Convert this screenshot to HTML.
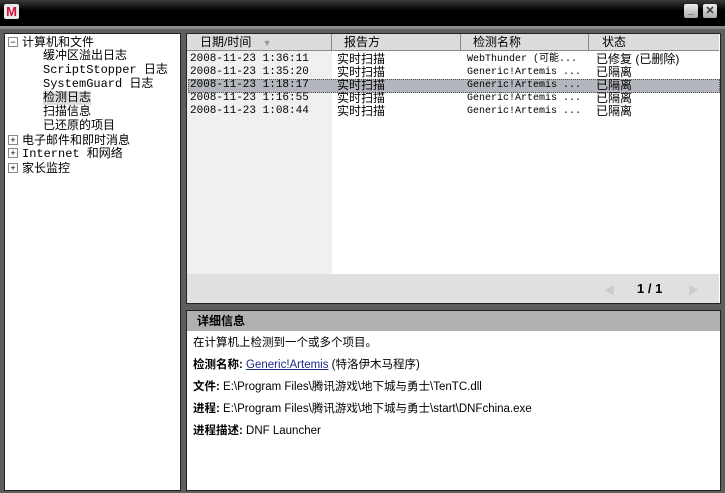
<!DOCTYPE html><html><head><meta charset="utf-8"><style>
body{margin:0;width:725px;height:493px;background:#5e5e5e;position:relative;overflow:hidden;font-family:"Liberation Sans","Noto Sans CJK SC",sans-serif;font-size:12px;color:#000}
.a{position:absolute}
.mono{font-family:"Liberation Mono","Noto Sans CJK SC",monospace;font-size:11px}
.r div{height:13px;line-height:13px;overflow:visible;white-space:nowrap}
.t div{height:14px;line-height:14px;white-space:nowrap}
.b{display:inline-block;width:8px;height:8px;border:1px solid #888;font:9px/8px sans-serif;text-align:center;margin-right:4px;vertical-align:1px}
</style></head><body>
<div class="a" style="left:0;top:0;width:725px;height:26px;background:linear-gradient(#3a3a3a,#000 40%,#000)"></div>
<div class="a" style="left:0;top:26px;width:725px;height:3px;background:#8a8a8a"></div>
<div class="a" style="left:4px;top:4px;width:15px;height:15px;background:#e8e8e8;border-radius:2px;color:#d0103a;font:bold 13px/15px 'Liberation Sans';text-align:center">M</div>
<div class="a" style="left:684px;top:4px;width:14px;height:14px;background:linear-gradient(#eee,#aaa);border-radius:2px;font:bold 10px/14px sans-serif;text-align:center;color:#333">_</div>
<div class="a" style="left:703px;top:4px;width:14px;height:14px;background:linear-gradient(#eee,#aaa);border-radius:2px;font:bold 11px/14px sans-serif;text-align:center;color:#333">✕</div>

<div class="a" style="left:4px;top:33px;width:175px;height:456px;background:#fff;border:1px solid #222"></div>
<div class="a t" style="left:8px;top:35px;width:170px;font-size:12px">
<div><span class="b">−</span>计算机和文件</div>
<div class="mono" style="padding-left:35px;font-size:12px">缓冲区溢出日志</div>
<div class="mono" style="padding-left:35px;font-size:12px">ScriptStopper 日志</div>
<div class="mono" style="padding-left:35px;font-size:12px">SystemGuard 日志</div>
<div class="mono" style="padding-left:35px;font-size:12px"><span style="background:#ddd">检测日志</span></div>
<div class="mono" style="padding-left:35px;font-size:12px">扫描信息</div>
<div class="mono" style="padding-left:35px;font-size:12px">已还原的项目</div>
<div><span class="b">+</span>电子邮件和即时消息</div>
<div class="mono" style="font-size:12px"><span class="b">+</span>Internet 和网络</div>
<div><span class="b">+</span>家长监控</div>
</div>

<div class="a" style="left:186px;top:33px;width:533px;height:269px;background:#fff;border:1px solid #222"></div>
<div class="a" style="left:187px;top:50px;width:145px;height:224px;background:#f0f0f0"></div>
<div class="a" style="left:187px;top:34px;width:532px;height:16px;background:#dcdcdc;border-bottom:1px solid #888"></div>
<div class="a" style="left:200px;top:35px;line-height:15px">日期/时间 <span style="color:#999;font-size:9px;margin-left:8px">▼</span></div>
<div class="a" style="left:331px;top:34px;width:1px;height:16px;background:#888"></div>
<div class="a" style="left:344px;top:35px;line-height:15px">报告方</div>
<div class="a" style="left:460px;top:34px;width:1px;height:16px;background:#888"></div>
<div class="a" style="left:473px;top:35px;line-height:15px">检测名称</div>
<div class="a" style="left:588px;top:34px;width:1px;height:16px;background:#888"></div>
<div class="a" style="left:602px;top:35px;line-height:15px">状态</div>
<div class="a" style="left:188px;top:79px;width:530px;height:12px;background:#b4b6be;border:1px dotted #555"></div>
<div class="a mono r" style="left:190px;top:53px"><div>2008-11-23 1:36:11</div><div>2008-11-23 1:35:20</div><div>2008-11-23 1:18:17</div><div>2008-11-23 1:16:55</div><div>2008-11-23 1:08:44</div></div>
<div class="a r" style="left:337px;top:53px"><div>实时扫描</div><div>实时扫描</div><div>实时扫描</div><div>实时扫描</div><div>实时扫描</div></div>
<div class="a mono r" style="left:467px;top:53px;font-size:10px"><div>WebThunder (可能...</div><div>Generic!Artemis ...</div><div>Generic!Artemis ...</div><div>Generic!Artemis ...</div><div>Generic!Artemis ...</div></div>
<div class="a r" style="left:596px;top:53px"><div>已修复 (已删除)</div><div>已隔离</div><div>已隔离</div><div>已隔离</div><div>已隔离</div></div>
<div class="a" style="left:187px;top:274px;width:532px;height:29px;background:#e0e0e0"></div>
<div class="a" style="left:604px;top:282px;color:#ccc;font-size:11px">◀</div>
<div class="a" style="left:637px;top:281px;font-weight:bold;font-size:13px">1 / 1</div>
<div class="a" style="left:688px;top:282px;color:#ccc;font-size:11px">▶</div>

<div class="a" style="left:186px;top:310px;width:533px;height:179px;background:#fff;border:1px solid #222"></div>
<div class="a" style="left:187px;top:311px;width:533px;height:20px;background:#b0b0b0"></div>
<div class="a" style="left:197px;top:313px;font-weight:bold;line-height:16px">详细信息</div>
<div class="a" style="left:193px;top:332px;line-height:22px;font-size:11.5px">
<div>在计算机上检测到一个或多个项目。</div>
<div><b>检测名称:</b> <span style="color:#1a2a8a;text-decoration:underline">Generic!Artemis</span> (特洛伊木马程序)</div>
<div><b>文件:</b> E:\Program Files\腾讯游戏\地下城与勇士\TenTC.dll</div>
<div><b>进程:</b> E:\Program Files\腾讯游戏\地下城与勇士\start\DNFchina.exe</div>
<div><b>进程描述:</b> DNF Launcher</div>
</div>
</body></html>
